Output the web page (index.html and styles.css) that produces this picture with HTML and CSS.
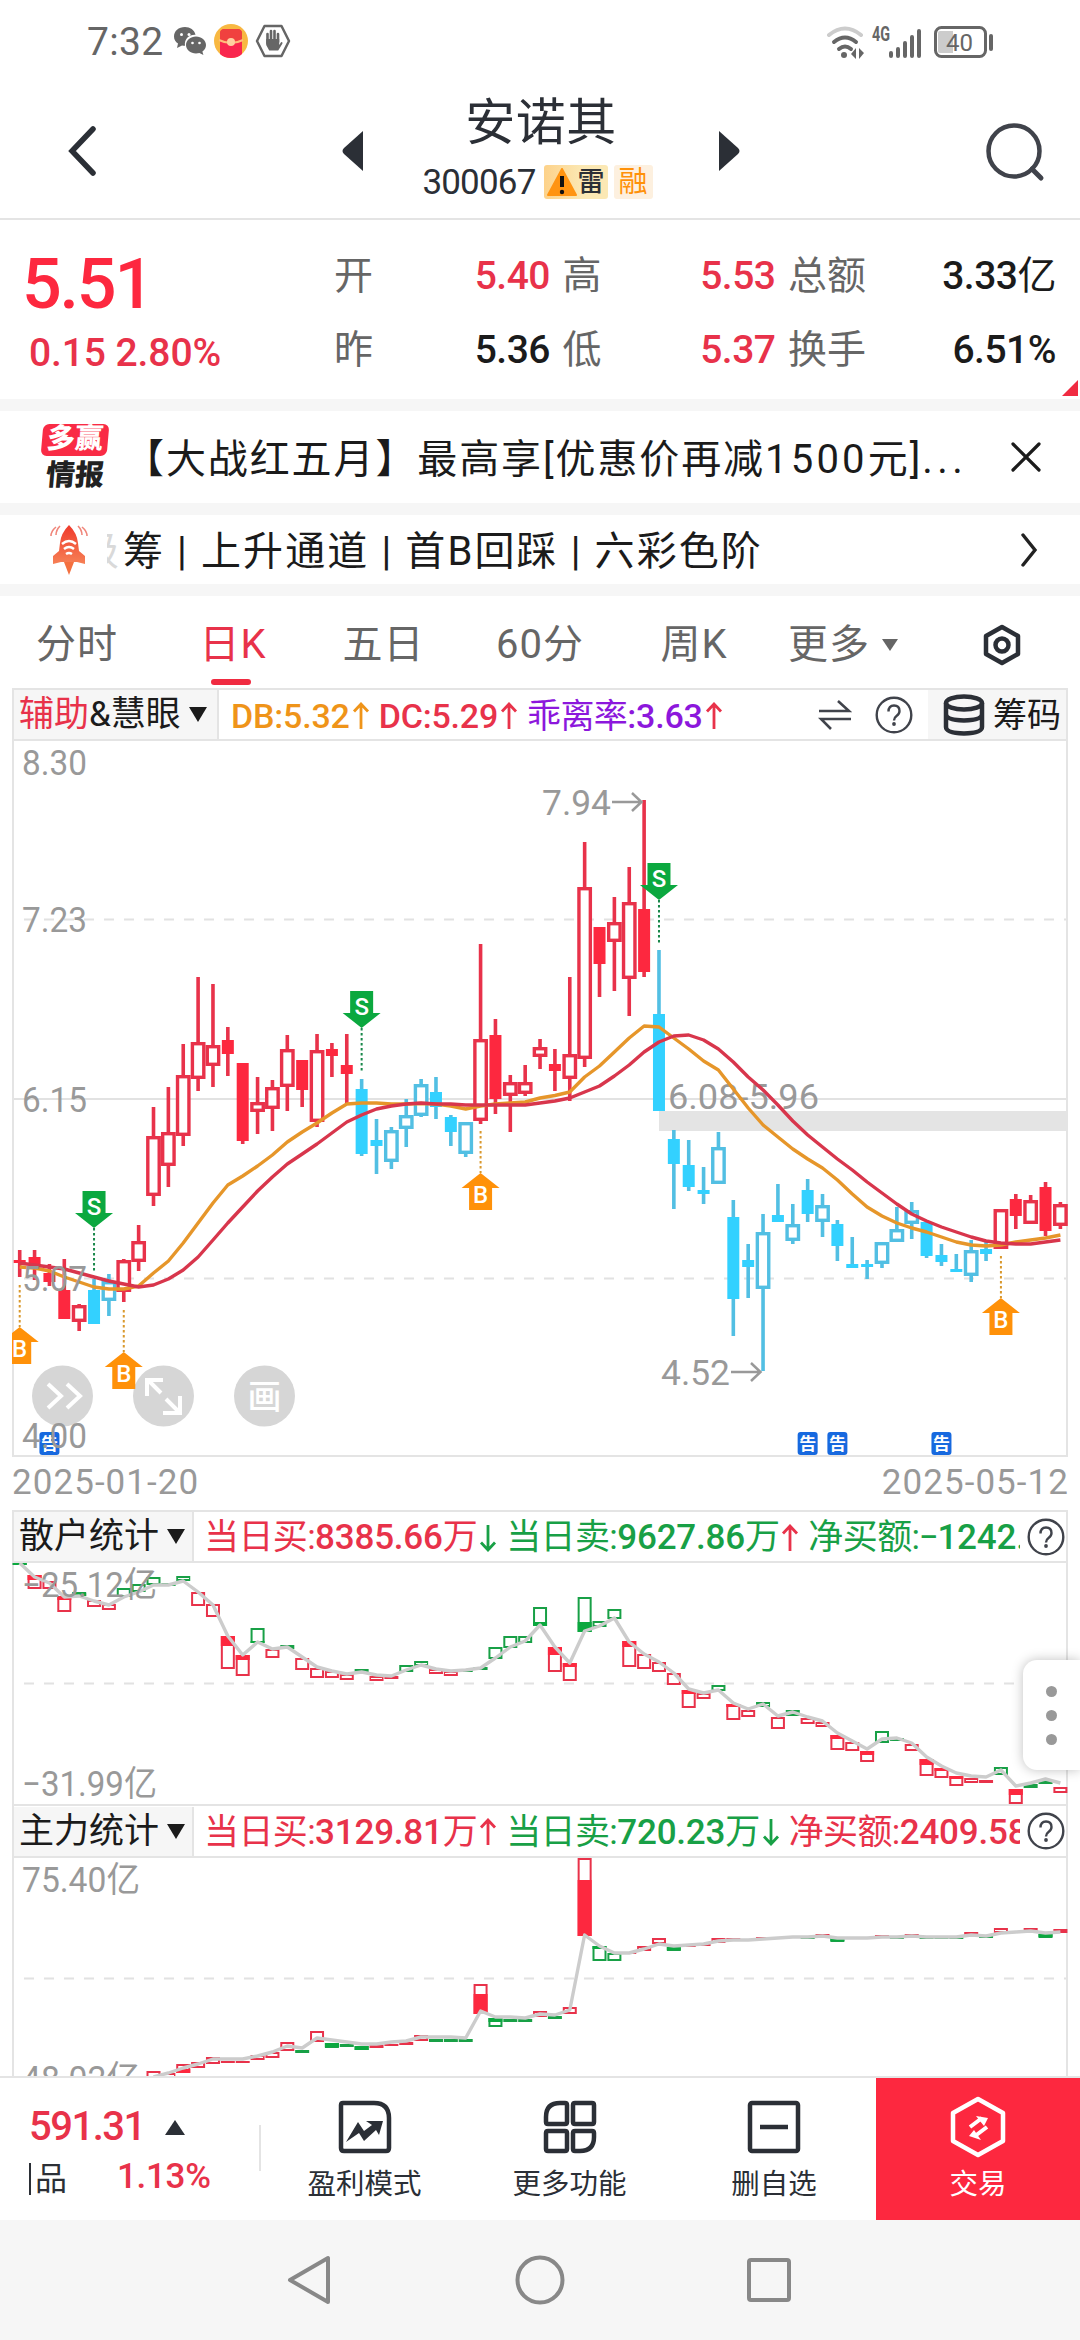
FILE: index.html
```html
<!DOCTYPE html>
<html lang="zh-CN">
<head>
<meta charset="utf-8">
<title>安诺其 300067</title>
<link rel="stylesheet" href="styles.css">
</head>
<body>
<div class="app">
  <header class="status">
    <span class="clock">7:32</span>
    <svg class="ic-wechat" width="34" height="30" viewBox="0 0 34 30"><path fill="#666" d="M12 1C5.500 1 1 5 1 10.500c0 3 1.500 5.500 4 7L4 22l5-2.600c1 .3 2 .4 3 .4C11 13 16 8.500 22.500 8.800 21.500 4 17 1 12 1z"/><path fill="#666" d="M23 10.500c-5.500 0-10 3.800-10 8.500s4.500 8.500 10 8.500c1.200 0 2.400-.2 3.400-.5l4 2-1-3.500c2.200-1.500 3.600-3.800 3.600-6.500 0-4.700-4.500-8.500-10-8.500z"/><g fill="#fff"><circle cx="8.500" cy="8.500" r="1.500"/><circle cx="16" cy="8.500" r="1.500"/><circle cx="19.500" cy="17" r="1.300"/><circle cx="26.500" cy="17" r="1.300"/></g></svg>
    <svg class="ic-packet" width="34" height="34" viewBox="0 0 34 34"><circle cx="17" cy="17" r="17" fill="#f8b842"/><path d="M6 10q0-5 5-5h12q5 0 5 5v20q-4 4-11 4T6 30z" fill="#f9264e"/><path d="M6 9q0-4 5-4h12q5 0 5 4v6q-11 7-22 0z" fill="#f0413f"/><path d="M5 16q12 6 24 0" fill="none" stroke="#ffbd7a" stroke-width="2"/><circle cx="17" cy="18" r="4" fill="#ffd0a0"/></svg>
    <svg class="ic-hand" width="36" height="34" viewBox="0 0 36 34"><path d="M9.500 2h17L34 17l-7.500 15h-17L2 17z" fill="none" stroke="#666" stroke-width="2.500" stroke-linejoin="round"/><path d="M12.500 19v-9M16 17V7M19.500 17V7M23 18v-8" stroke="#666" stroke-width="2.600" stroke-linecap="round"/><path d="M11.200 15h13V21l2-3q2 0 1 2l-4 6.500h-9L11.200 21z" fill="#666"/></svg>
    <span class="grow"></span>
    <svg width="168" height="40" viewBox="0 0 168 40"><g fill="none" stroke-linecap="round"><path d="M3 14q16-13 32 0" stroke="#ccc" stroke-width="4"/><path d="M8 21q11-9 22 0M13 28q6-5 12 0" stroke="#666" stroke-width="4"/></g><circle cx="18" cy="34" r="3" fill="#666"/><path d="M30 27v11l-5-5M33 38V27l5 5z" fill="#666"/><text x="46" y="20" class="net" textLength="18" lengthAdjust="spacingAndGlyphs">4G</text><path d="M65 32v3M72 28v7M79 22v13M86 16v19M93 10v25" stroke="#666" stroke-width="4" stroke-linecap="round"/><rect x="109.500" y="6.500" width="50" height="29" rx="6" fill="#fff" stroke="#666" stroke-width="3"/><path d="M114 10h13v22h-13q-2 0-2-2V12q0-2 2-2z" fill="#ccc"/><text x="120" y="30" class="bat" textLength="27" lengthAdjust="spacingAndGlyphs">40</text><path d="M165 15v13" stroke="#666" stroke-width="4" stroke-linecap="round"/></svg>
  </header>

  <nav class="topbar">
    <svg class="back" width="34" height="54" viewBox="0 0 34 54"><path d="M28 5L7 27l21 22" fill="none" stroke="#2b2f36" stroke-width="5.500" stroke-linecap="round"/></svg>
    <svg class="prev" width="22" height="42" viewBox="0 0 22 42"><path d="M21 1v40L2 24q-3-3 0-6z" fill="#2b2f36"/></svg>
    <div class="stock">
      <h1>安诺其</h1>
      <div class="code"><span>300067</span>
        <span class="badge risk"><svg width="30" height="28" viewBox="0 0 30 28"><path d="M15 1L29 27H1z" fill="#ff9412" stroke="#ff9412" stroke-linejoin="round" stroke-width="2"/><path d="M15 8v11" stroke="#111" stroke-width="4"/><circle cx="15" cy="24" r="2.200" fill="#111"/></svg>雷</span>
        <span class="badge margin">融</span></div>
    </div>
    <svg class="next" width="22" height="42" viewBox="0 0 22 42"><path d="M1 1v40l19-17q3-3 0-6z" fill="#2b2f36"/></svg>
    <svg class="search" width="62" height="62" viewBox="0 0 62 62"><circle cx="30" cy="30" r="25.500" fill="none" stroke="#40434b" stroke-width="4.500"/><path d="M48 48l9 9" stroke="#40434b" stroke-width="5" stroke-linecap="round"/></svg>
  </nav>

  <section class="quote">
    <div class="last"><b>5.51</b><span>0.15 2.80%</span></div>
    <dl>
      <div><dt>开</dt><dd class="up">5.40</dd></div><div><dt>高</dt><dd class="up">5.53</dd></div><div><dt>总额</dt><dd>3.33<em>亿</em></dd></div>
      <div><dt>昨</dt><dd>5.36</dd></div><div><dt>低</dt><dd class="up">5.37</dd></div><div><dt>换手</dt><dd>6.51%</dd></div>
    </dl>
    <i class="corner"></i>
  </section>

  <section class="promo">
    <div class="logo"><span class="logo-a">多赢</span><span class="logo-b">情报</span></div>
    <p>【大战红五月】最高享[优惠价再减<span class="sum">1500</span>元]<span class="dots">...</span></p>
    <svg width="30" height="30" viewBox="0 0 30 30"><path d="M2 2l26 26M28 2L2 28" stroke="#1b1b1b" stroke-width="3.200" stroke-linecap="round"/></svg>
  </section>

  <section class="features">
    <svg class="rocket" width="42" height="52" viewBox="0 0 42 52"><defs><linearGradient id="rk" x1="0" y1="0" x2="0" y2="1"><stop offset="0" stop-color="#ef3a2c"/><stop offset="1" stop-color="#f68055"/></linearGradient></defs><path d="M16 38h10l-5 13z" fill="#f4703f"/><path d="M21 1q8 8 9 18l1 8 6 5v8l-8-2H13l-8 2v-8l6-5 1-8Q13 9 21 1z" fill="url(#rk)"/><path d="M14 20q7-6 14 0M16 25q5-4 10 0M18 30q3-2 6 0" fill="none" stroke="#fff" stroke-width="2.400"/><path d="M8 3q-5 4-5 9M12 2Q8 6 8 11M34 3q5 4 5 9M30 2q4 4 4 9" fill="none" stroke="#f0867a" stroke-width="1.600"/></svg>
    <span class="cut">级</span>
    <p>筹 | 上升通道 | 首B回踩 | 六彩色阶</p>
    <svg width="18" height="36" viewBox="0 0 18 36"><path d="M2 3l12 15L2 33" fill="none" stroke="#222" stroke-width="3.400" stroke-linecap="round"/></svg>
  </section>

  <div class="tabs">
    <span>分时</span><span class="on">日K</span><span>五日</span><span>60分</span><span>周K</span>
    <span>更多<svg width="18" height="14" viewBox="0 0 18 14"><path d="M1 1h16L9 13z" fill="#666"/></svg></span>
    <span><svg width="38" height="42" viewBox="0 0 38 42"><path d="M19 3l16 9v18l-16 9-16-9V12z" fill="none" stroke="#2b2f36" stroke-width="4.500" stroke-linejoin="round"/><circle cx="19" cy="21" r="6.500" fill="none" stroke="#2b2f36" stroke-width="4.500"/></svg></span>
  </div>

  <section class="panel main">
    <div class="bar">
      <div class="pick wide"><span class="up">辅助</span>&amp;慧眼<i class="tri"></i></div>
      <div class="vals">
        <span class="db"><b>DB:5.32</b><svg class="ar"><use href="#up"/></svg></span>
        <span class="up"><b>DC:5.29</b><svg class="ar"><use href="#up"/></svg></span>
        <span class="bias">乖离率<b>:3.63</b><svg class="ar up"><use href="#up"/></svg></span>
      </div>
      <svg class="swap" width="34" height="30" viewBox="0 0 34 30"><path d="M1 11h30L20 1M33 19H3l10 10" fill="none" stroke="#40434b" stroke-width="2.600"/></svg>
      <svg class="help"><use href="#help"/></svg>
      <div class="chips"><svg width="42" height="42" viewBox="0 0 42 42"><g fill="none" stroke="#2b2f36" stroke-width="4.500"><ellipse cx="21" cy="9" rx="18" ry="6.500"/><path d="M3 9v24q0 6 18 6.500Q39 39 39 33V9M3 20q0 6 18 6.500Q39 26 39 20"/></g></svg>筹码</div>
    </div>
    <svg id="kline" class="plot" width="1056" height="716" viewBox="12 741 1056 716"></svg>
  </section>
  <div class="dates"><span>2025-01-20</span><span>2025-05-12</span></div>

  <section class="panel retail">
    <div class="bar">
      <div class="pick">散户统计<i class="tri"></i></div>
      <div class="vals">
        <span class="up">当日买:<b>8385.66</b>万<svg class="ar down"><use href="#dn"/></svg></span>
        <span class="down">当日卖:<b>9627.86</b>万<svg class="ar up"><use href="#up"/></svg></span>
        <span class="down">净买额:<em>−</em><b>1242.</b></span>
      </div>
      <svg class="help"><use href="#help"/></svg>
    </div>
    <svg id="retail" class="plot" width="1056" height="241" viewBox="12 1563 1056 241"></svg>
    <aside class="drawer"><i></i><i></i><i></i></aside>
  </section>

  <section class="panel force">
    <div class="bar">
      <div class="pick">主力统计<i class="tri"></i></div>
      <div class="vals">
        <span class="up">当日买:<b>3129.81</b>万<svg class="ar"><use href="#up"/></svg></span>
        <span class="down">当日卖:<b>720.23</b>万<svg class="ar"><use href="#dn"/></svg></span>
        <span class="up">净买额:<b>2409.58</b></span>
      </div>
      <svg class="help"><use href="#help"/></svg>
    </div>
    <svg id="force" class="plot" width="1056" height="218" viewBox="12 1858 1056 218"></svg>
  </section>

  <footer class="actions">
    <div class="index">
      <div><b>591.31</b><i></i></div>
      <div class="row2"><span>品</span><em>1.13%</em></div>
    </div>
    <div class="act"><svg width="54" height="54" viewBox="0 0 54 54"><path d="M5 3h31q15 0 15 15v30q0 3-3 3H6q-3 0-3-3V5q0-2 2-2z" fill="none" stroke="#2b2f36" stroke-width="4.500"/><path d="M8 42l12-20 6 9 8-6-6-4h17l-4 14-3-5-12 11-5-8z" fill="#2b2f36"/></svg>盈利模式</div>
    <div class="act"><svg width="54" height="54" viewBox="0 0 54 54"><g fill="none" stroke="#2b2f36" stroke-width="4.500"><path d="M17 3h5q2 0 2 2v17q0 2-2 2H5q-2 0-2-2v-5Q3 3 17 3zM32 3h17q2 0 2 2v17q0 2-2 2H32q-2 0-2-2V5q0-2 2-2zM5 31h17q2 0 2 2v16q0 2-2 2H5q-2 0-2-2V33q0-2 2-2zM32 31h17q2 0 2 2v4q0 14-14 14h-5q-2 0-2-2V33q0-2 2-2z"/></g></svg>更多功能</div>
    <div class="act"><svg width="54" height="54" viewBox="0 0 54 54"><rect x="3" y="3" width="48" height="48" rx="2" fill="none" stroke="#2b2f36" stroke-width="4.500"/><path d="M13 27h28" stroke="#2b2f36" stroke-width="4.500"/></svg>删自选</div>
    <div class="trade"><svg width="56" height="62" viewBox="0 0 56 62"><path d="M28 3l25 14v28L28 59 3 45V17z" fill="none" stroke="#fff" stroke-width="4.500" stroke-linejoin="round"/><path d="M20 31l12-9M37 31l-12 9" stroke="#fff" stroke-width="4"/><path d="M26 20l12 2-4 8zM31 44l-12-4 5-6z" fill="#fff"/></svg>交易</div>
  </footer>

  <div class="sysnav">
    <svg width="48" height="52" viewBox="0 0 48 52"><path d="M43 4v44L5 26z" fill="none" stroke="#888" stroke-width="4" stroke-linejoin="round"/></svg>
    <svg width="52" height="52" viewBox="0 0 52 52"><circle cx="26" cy="26" r="22.500" fill="none" stroke="#888" stroke-width="4"/></svg>
    <svg width="46" height="46" viewBox="0 0 46 46"><rect x="3" y="3" width="40" height="40" rx="2" fill="none" stroke="#888" stroke-width="4"/></svg>
  </div>
</div>

<svg class="defs">
  <symbol id="up" viewBox="0 0 18 28"><path d="M9 27V2M2 9.500L9 2l7 7.500" fill="none" stroke="currentColor" stroke-width="2.800"/></symbol>
  <symbol id="dn" viewBox="0 0 18 28"><path d="M9 1v25M2 18.500L9 26l7-7.500" fill="none" stroke="currentColor" stroke-width="2.800"/></symbol>
  <symbol id="help" viewBox="0 0 38 38"><circle cx="19" cy="19" r="17.300" fill="none" stroke="#40434b" stroke-width="2.400"/><path d="M13.500 15.500q0-6 5.500-6t5.500 5.500q0 3-3 5-2.500 1.800-2.500 4.500" fill="none" stroke="#40434b" stroke-width="2.400"/><circle cx="19" cy="28" r="1.900" fill="#40434b"/></symbol>
</svg>
<script src="chart.js"></script>
</body>
</html>
```
FILE: styles.css
```css
* { box-sizing: border-box; margin: 0; padding: 0; }
body { width: 1080px; height: 2340px; overflow: hidden; background: #f6f6f6; font-family: Roboto, "Noto Sans CJK SC", sans-serif; color: #1b1b1b; line-height: 1; }
i, em { font-style: normal; }
svg { display: block; flex: none; }
.defs { display: none; }
.app { display: flex; flex-direction: column; width: 1080px; height: 2340px; }
.app > * { flex: none; }
.grow { flex: 1; }
.up { color: #e8324a; }
.down { color: #18a046; }

.status { height: 80px; background: #fff; display: flex; align-items: center; padding: 2px 86px 0 87px; }
.clock { font-size: 39px; color: #666; width: 86px; letter-spacing: .3px; padding-top: 3px; }
.ic-packet { margin-left: 7px; }
.ic-hand { margin-left: 7px; }
.net { font: 700 20px Roboto, sans-serif; fill: #666; }
.bat { font: 24px Roboto, sans-serif; fill: #666; }

.topbar { height: 140px; background: #fff; border-bottom: 2px solid #e4e4e4; display: flex; padding-left: 65px; }
.back { margin-top: 44px; }
.prev { margin: 50px 0 0 243px; }
.stock { width: 354px; display: flex; flex-direction: column; align-items: center; }
.stock h1 { font-size: 50px; font-weight: 400; color: #2b2f36; line-height: 60px; margin-top: 13px; letter-spacing: .5px; }
.code { display: flex; align-items: center; font-size: 35px; color: #2b2f36; letter-spacing: -.8px; height: 34px; margin-top: 12px; margin-right: 7px; }
.badge { height: 34px; display: flex; align-items: center; border-radius: 3px; letter-spacing: 0; }
.risk { width: 64px; margin: 0 6px 0 8px; padding-left: 3px; background: linear-gradient(90deg, #fdd28a, #fbe8b4 60%); font-size: 27px; font-weight: 500; gap: 1px; }
.margin { width: 39px; justify-content: center; background: #fdf0df; color: #ff9109; font-size: 29px; }
.next { margin-top: 50px; }
.search { margin: 41px 0 0 244px; }

.quote { position: relative; height: 179px; background: #fff; display: flex; }
.last { width: 334px; padding-left: 22px; color: #fd283f; }
.last b { display: block; font-size: 70px; font-weight: 500; letter-spacing: -2.200px; line-height: 70px; margin-top: 29px; }
.last span { display: block; margin: 14px 0 0 7px; font-size: 39px; font-weight: 500; letter-spacing: -.1px; line-height: 40px; color: #e8324a; }
.quote dl { width: 724px; display: grid; grid-template-columns: 216px 213px 268px; column-gap: 12.500px; grid-template-rows: 74px 74px; padding-top: 19px; }
.quote dl > div { display: flex; justify-content: space-between; align-items: center; font-size: 39px; }
.quote dt { color: #666; }
.quote dd { font-weight: 500; letter-spacing: -.5px; }
.quote dd em { font-weight: 400; }
.corner { position: absolute; right: 2px; bottom: 3px; border: 8px solid transparent; border-right-color: #f02b41; border-bottom-color: #f02b41; }

.promo { margin-top: 12px; height: 92px; background: #fff; display: flex; align-items: center; padding-left: 40px; }
.logo { width: 70px; display: flex; flex-direction: column; align-items: center; gap: 5px; }
.logo span { font-weight: 900; transform: skewX(-5deg); }
.logo-a { width: 66px; height: 32px; border-radius: 6px; background: #f92b45; color: #fff; font-size: 28px; line-height: 30px; text-align: center; }
.logo-b { font-size: 29px; line-height: 29px; color: #222; }
.promo p { width: 901px; padding: 5px 0 0 14px; font-size: 40px; letter-spacing: 1.900px; white-space: nowrap; }
.sum { letter-spacing: 3.200px; }
.dots { letter-spacing: 4.500px; }
.features { margin-top: 12px; height: 69px; background: #fff; display: flex; align-items: center; padding-left: 48px; font-size: 40px; }
.cut { display: flex; justify-content: flex-end; width: 12px; margin: 4px 4px 0 17px; overflow: hidden; color: #d9d9d9; }
.features p { width: 898px; padding-top: 4px; letter-spacing: 2.100px; white-space: pre; }

.tabs { margin-top: 12px; height: 92px; background: #fff; display: grid; grid-template-columns: 154px 158px 143px 170px 138px 161px 156px; font-size: 40px; letter-spacing: 1px; color: #666; }
.tabs span { position: relative; display: flex; align-items: center; justify-content: center; gap: 11px; padding-top: 5px; }
.tabs .on { color: #e8324a; }
.tabs .on::after { content: ""; position: absolute; left: 57px; bottom: 3px; width: 40px; height: 6px; border-radius: 3px; background: #f02b41; }

.panel { position: relative; background: #fff; padding: 0 12px; }
.bar { height: 53px; border: 2px solid #e4e4e4; display: flex; align-items: center; font-size: 35px; }
.pick { width: 180px; height: 49px; flex: none; background: #f6f6f6; border-right: 2px solid #e4e4e4; display: flex; align-items: center; padding-left: 5px; white-space: nowrap; }
.pick.wide { width: 205px; font-size: 35px; }
.tri { border: 9px solid transparent; border-top: 15px solid #1b1b1b; border-bottom: 0; margin-left: 8px; }
.vals { flex: none; width: 826px; padding: 0 0 0 10px; display: flex; gap: 9px; overflow: hidden; white-space: nowrap; font-size: 35px; }
.vals span { display: flex; align-items: baseline; letter-spacing: -.6px; flex: none; padding-top: 2px; }
.vals b { font-weight: 500; letter-spacing: -.2px; }
.ar { width: 18px; height: 28px; margin-left: 2px; align-self: center; }
.help { width: 38px; height: 38px; margin-left: 7px; }
.main .vals { width: 599px; font-size: 34px; padding-left: 12px; }
.main .help { margin-left: 23px; }
.db { color: #ef9419; }
.bias { color: #8c17dc; }
.swap { flex: none; }
.chips { flex: none; width: 138px; height: 49px; margin-left: 15px; background: #f6f6f6; display: flex; align-items: center; gap: 8px; padding-left: 15px; font-size: 34px; }
.plot { border: 0; }
.dates { height: 53px; background: #fff; display: flex; justify-content: space-between; padding: 7px 11px 0 12px; font-size: 35px; letter-spacing: 1.050px; color: #999; line-height: 38px; }
.force .bar { height: 54px; }
.retail em { display: flex; justify-content: center; width: 18px; }
.drawer { position: absolute; right: 0; top: 150px; width: 57px; height: 110px; border-radius: 14px 0 0 14px; background: #fff; box-shadow: 0 0 12px rgba(0,0,0,.25); display: flex; flex-direction: column; align-items: center; justify-content: center; gap: 13px; }
.drawer i { width: 11px; height: 11px; border-radius: 50%; background: #999; }
.axis { font: 35px Roboto, "Noto Sans CJK SC", sans-serif; fill: #999; }
.mark { font: 500 24px Roboto, sans-serif; fill: #fff; text-anchor: middle; }
.note { font: 700 17px "Noto Sans CJK SC", sans-serif; fill: #fff; text-anchor: middle; }
.draw { font: 500 34px "Noto Sans CJK SC", sans-serif; fill: #fff; text-anchor: middle; }

.actions { height: 144px; background: #fff; border-top: 2px solid #e4e4e4; display: grid; grid-template-columns: 262px 205px 205px 204px 204px; color: #2b2f36; }
.index { position: relative; padding: 30px 0 0 29px; }
.index::after { content: ""; position: absolute; right: 1px; top: 47px; width: 2px; height: 46px; background: #e4e4e4; }
.index div { display: flex; align-items: center; height: 38px; }
.index b { font-size: 40px; font-weight: 500; letter-spacing: -1.500px; color: #e8324a; }
.index i { border: 10px solid transparent; border-bottom: 15px solid #2b2f36; border-top: 0; margin-left: 20px; }
.index .row2 { margin-top: 11px; font-size: 32px; }
.row2 span { border-left: 2px solid #2b2f36; padding-left: 4px; margin-top: 5px; }
.row2 em { margin-left: 50px; font-size: 35px; font-weight: 500; letter-spacing: -.3px; color: #e8324a; }
.act, .trade { display: flex; flex-direction: column; align-items: center; font-size: 28.500px; padding-top: 22px; gap: 17px; }
.trade { background: #fd283f; color: #fff; padding-top: 18px; gap: 13px; }

.sysnav { height: 120px; background: #f6f6f6; display: flex; align-items: center; justify-content: space-between; padding: 0 288px 0 285px; }
```
FILE: chart.js
```js
const RED = '#e8324a', RED_FILL = '#fd283f', CYAN = '#52bfe3', CYAN_FILL = '#33d1ff', GREEN = '#18a046', GREEN_FILL = '#0ba83f';
const X = i => 19.7 + 14.867 * i;
const rect = (x, y, w, h, a) => `<rect x="${x}" y="${y}" width="${w}" height="${h}" ${a}/>`;
const poly = (v, from, color, w) => `<polyline points="${v.map((y, i) => X(i + from).toFixed(1) + ',' + y).join(' ')}" fill="none" stroke="${color}" stroke-width="${w}" stroke-linejoin="round"/>`;
const label = (x, y, s, len) => `<text x="${x}" y="${y}" class="axis" textLength="${len}" lengthAdjust="spacingAndGlyphs">${s}</text>`;
const dash = y => `<path d="M4 ${y}H1067" stroke="#e2e2e2" stroke-width="2" stroke-dasharray="10 10"/>`;
const frame = (y, b) => `<path d="M13 ${y}V${b}M1067 ${y}V${b}" stroke="#e4e4e4" stroke-width="2"/>`;

// [style, high, body top, body bottom, low]; lower case is filled, upper case is hollow
const candles = [
['r',1250,1260,1263,1277],['r',1250,1257,1265,1280],['r',1264,1273,1282,1286],['r',1259,1290,1319,1319],['R',1304,1305,1322,1331],
['c',1279,1290,1324,1324],['C',1274,1281,1301,1316],['R',1259,1260,1292,1302],['R',1225,1241,1262,1271],['R',1107,1136,1196,1206],
['R',1087,1132,1166,1187],['R',1044,1075,1136,1146],['R',977,1042,1079,1091],['R',984,1045,1066,1087],['r',1027,1040,1054,1076],
['r',1063,1063,1141,1144],['R',1077,1102,1112,1134],['R',1080,1087,1109,1131],['R',1035,1049,1087,1111],['r',1060,1060,1090,1107],
['R',1034,1050,1122,1127],['r',1043,1049,1056,1077],['r',1034,1065,1074,1105],['c',1079,1089,1154,1156],['c',1119,1140,1146,1174],
['C',1127,1130,1162,1169],['C',1099,1115,1129,1147],['C',1079,1084,1116,1117],['c',1077,1092,1107,1119],['c',1115,1117,1132,1146],
['C',1122,1122,1154,1157],['R',944,1039,1121,1124],['r',1019,1035,1099,1114],['R',1075,1082,1096,1132],['R',1065,1082,1094,1096],
['R',1039,1047,1057,1069],['r',1049,1064,1071,1091],['R',977,1054,1079,1101],['R',842,887,1059,1067],['r',927,927,964,997],
['R',897,922,942,991],['R',867,902,979,1016],['r',800,909,972,977],['c',950,1014,1111,1111],['c',1130,1139,1164,1209],
['c',1140,1165,1187,1191],['c',1167,1190,1194,1204],['C',1132,1147,1184,1184],['c',1200,1217,1299,1336],['c',1244,1260,1267,1298],
['C',1214,1232,1289,1371],['c',1184,1215,1222,1222],['C',1204,1224,1241,1244],['c',1179,1190,1214,1222],['C',1194,1205,1222,1237],
['c',1220,1224,1246,1261],['c',1237,1264,1268,1268],['c',1260,1264,1267,1279],['C',1242,1242,1264,1268],['C',1207,1229,1242,1242],
['C',1202,1210,1224,1239],['c',1222,1222,1256,1258],['c',1244,1255,1262,1266],['c',1254,1269,1272,1272],['C',1240,1250,1276,1282],
['c',1240,1249,1254,1261],['R',1209,1209,1249,1249],['r',1194,1199,1216,1229],['R',1195,1200,1224,1224],['r',1182,1187,1231,1236],
['R',1202,1204,1226,1229]];

const db = [1267,1268,1271,1277,1282,1287,1289,1289,1286,1273,1261,1243,1223,1203,1185,1176,1166,1155,1142,1132,1123,1113,1104,1103,1103,1104,1104,1103.500,1104,1106,1109,1106,1104,1103,1102,1098,1095.500,1092,1077,1066,1052,1038,1026,1027,1038,1049,1061,1070,1089,1108,1125,1137,1149,1159,1168,1180,1194,1207,1216,1223,1228,1232,1237,1242,1245,1246,1245,1242,1240,1238,1235];
const dc = [1263,1265,1267,1269,1273,1277,1281,1284,1287,1285,1279,1270,1257,1240,1223,1207,1191,1177,1164,1154,1144,1133,1122,1115,1109,1106,1104,1103,1104,1104,1105,1105,1105,1105,1105,1103,1101,1098,1092,1086,1076,1065,1052,1042,1036,1035,1040,1049,1062,1077,1090,1105,1121,1135,1147,1159,1170,1182,1193,1204,1214,1221,1227,1232,1237,1241,1243,1244,1244,1242,1240];

function candle([t, h, a, b, l], i) {
  const x = X(i), red = t.toLowerCase() === 'r', c = red ? RED : CYAN;
  if (t === t.toLowerCase()) {
    return rect(x - 1.8, h, 3.600, l - h, `fill="${c}"`) + rect(x - 6, a, 12, b - a, `fill="${red ? RED_FILL : CYAN_FILL}"`);
  }
  return rect(x - 1.8, h, 3.600, a - h + 1, `fill="${c}"`) + rect(x - 1.8, b - 1, 3.600, l - b + 1, `fill="${c}"`) +
    rect(x - 5.700, a + 1.700, 11.400, b - a - 3.400, `fill="#fff" stroke="${c}" stroke-width="3.400"`);
}
function sell(i, y) {
  const x = X(i);
  return `<path d="M${x - 11.500} ${y}h23v22h7.500L${x} ${y + 37}L${x - 19} ${y + 22}h7.500z" fill="${GREEN_FILL}"/><path d="M${x} ${y + 37}v43" stroke="#18874a" stroke-width="2" stroke-dasharray="2.500 2.500"/><text x="${x}" y="${y + 24}" class="mark">S</text>`;
}
function buy(i, y) {
  const x = X(i);
  return `<path d="M${x} ${y}L${x + 19} ${y + 15}h-7.500v22h-23v-22H${x - 19}z" fill="#ff9109"/><path d="M${x} ${y - 42}v42" stroke="#d9982c" stroke-width="2" stroke-dasharray="2.500 2.500"/><text x="${x}" y="${y + 30}" class="mark">B</text>`;
}
const arrow = (x, y) => `<path d="M${x} ${y}h29M${x + 20} ${y - 9}l9.500 9l-9.500 9" fill="none" stroke="#999" stroke-width="2.500"/>`;
const notice = i => rect(X(i) - 10, 1432, 20, 23, 'rx="3" fill="#1769df"') + `<text x="${X(i)}" y="1450" class="note">告</text>`;

document.getElementById('kline').innerHTML =
  dash(919.5) + dash(1278.5) + '<path d="M12 1099H1068" stroke="#e2e2e2" stroke-width="2"/>' + frame(741, 1457) +
  '<path d="M12 1456H1068" stroke="#e4e4e4" stroke-width="2"/>' +
  rect(659, 1111, 409, 20, 'fill="#e4e4e4"') +
  ['62.5', '163.5', '264.5'].map(x => `<circle cx="${x}" cy="1396" r="30.500" fill="#d6d6d6"/>`).join('') +
  '<path d="M48 1384l13 12-13 12M67 1384l13 12-13 12" fill="none" stroke="#fff" stroke-width="4"/>' +
  '<path d="M161 1393l-13-13M166 1399l13 13M147 1396v-16h16M180 1396v17h-17" fill="none" stroke="#fff" stroke-width="4"/>' +
  '<text x="264.5" y="1409" class="draw">画</text>' +
  candles.map(candle).join('') +
  label(668, 1109, '6.08-5.96', 151) + poly(db, 0, '#e6962a', 3.400) + poly(dc, 0, '#d8364c', 3.400) +
  sell(5, 1191) + sell(23, 991) + sell(43, 863) + buy(0, 1327) + buy(7, 1352) + buy(31, 1173) + buy(66, 1298) +
  label(542, 815, '7.94', 69) + arrow(612, 802) + label(661, 1385, '4.52', 69) + arrow(731, 1372) +
  [2, 53, 55, 62].map(notice).join('') +
  label(22, 775, '8.30', 65) + label(22, 932, '7.23', 65) + label(22, 1112, '6.15', 65) + label(22, 1291, '5.07', 65) + label(22, 1448, '4.00', 65);

// [colour, top, bottom, solid part]; the solid part sits on the side nearest the line
const retail = [
['g',1562,1565,3],['r',1575,1589,5],['r',1581,1589],['r',1596,1612,4],['g',1592,1596,3],['r',1600,1607],['r',1604,1610],['g',1588,1597],['g',1584,1592],['g',1577,1585],
['g',1583,1586,2],['g',1576,1581],['r',1592,1606],['r',1604,1617],['r',1636,1669,10],['r',1655,1676,5],['g',1628,1643,2],['r',1649,1658],['g',1645,1649],['r',1658,1670],
['r',1668,1678],['r',1671,1678],['r',1674,1680],['g',1669,1673],['r',1676,1681],['r',1676,1679],['g',1665,1672],['g',1661,1666],['r',1669,1674],['r',1671,1676],
['g',1669,1672],['g',1667,1670],['g',1647,1659],['g',1636,1648],['g',1636,1643],['g',1607,1626,4],['r',1647,1672,8],['r',1663,1681,4],['g',1597,1632,10],['g',1621,1627],
['g',1609,1619],['r',1641,1667,6],['r',1654,1669],['r',1662,1672],['r',1673,1685],['r',1690,1708,4],['r',1693,1699],['g',1685,1691],['r',1704,1720,3],['r',1710,1717],
['g',1702,1707],['r',1717,1729],['g',1710,1716],['r',1718,1724],['r',1722,1727],['r',1735,1750,4],['r',1742,1751],['r',1751,1762,4],['g',1731,1743],['g',1738,1741],
['r',1744,1751],['r',1759,1776,6],['r',1768,1778,3],['r',1776,1786,3],['r',1778,1783],['r',1780,1783],['g',1767,1775],['r',1789,1804,6],['g',1784,1788],['g',1780,1784],['r',1787,1793]];
const retailLine = [1563,1577,1583,1597,1596,1601,1605,1597,1592,1585,1585,1581,1592,1605,1636,1655,1642,1649,1647,1657,1667,1671,1674,1672,1675,1676,1670,1665,1669,1671,1670,1668,1658,1647,1641,1625,1647,1663,1631,1626,1618,1642,1654,1662,1673,1689,1693,1690,1703,1709,1704,1716,1712,1717,1721,1733,1741,1749,1739,1738,1743,1757,1766,1773,1776,1777,1770,1786,1783,1779,1783];
const force = [
['r',2071,2078],['r',2073,2078],['r',2064,2073,4],['r',2062,2068],['r',2057,2064],['r',2061,2063],['r',2061,2063],['r',2055,2060],['r',2052,2058],['r',2042,2051],
['g',2050,2053],['r',2031,2042],['g',2043,2048,4],['g',2044,2047],['g',2046,2050,4],['r',2045,2048],['r',2044,2046],['r',2042,2045],['r',2035,2041],['g',2039,2042],
['g',2039,2042],['g',2039,2042],['r',1984,2014,20],['g',2018,2027,4],['g',2019,2022],['g',2019,2022],['r',2011,2017],['g',2016,2019],['r',2007,2014],['r',1858,1936,56],
['g',1946,1961,3],['g',1953,1961],['r',1952,1954],['r',1946,1951],['r',1938,1944],['g',1947,1951,3],['r',1945,1947],['r',1943,1946],['r',1938,1943],['r',1938,1941],
['r',1939,1941],['r',1937,1940],['r',1937,1939],['r',1936,1938],['g',1937,1939],['r',1934,1938],['g',1938,1942,3],['r',1937,1939],['r',1937,1939],['r',1935,1938],
['g',1936,1939],['r',1934,1938],['g',1937,1939],['g',1937,1939],['g',1937,1939],['r',1932,1936],['g',1935,1938],['r',1928,1933],['r',1931,1933],['r',1928,1932],['g',1934,1938,3],['r',1929,1933]];
const forceLine = [2077,2073,2068,2064,2059,2059,2059,2056,2052,2046,2048,2038,2040,2042,2044,2044,2042,2041,2037,2037,2037,2038,2011,2017,2017,2018,2014,2015,2010,1935,1946,1953,1953,1949,1944,1946,1945,1944,1941,1940,1940,1939,1938,1937,1937,1936,1938,1938,1938,1937,1937,1936,1937,1937,1937,1935,1936,1933,1932,1931,1933,1932];

function boxes(data, from, solidLow) {
  return data.map(([t, a, b, f], i) => {
    const x = X(i + from), red = t === 'r', h = b - a;
    let s = h < 4 ? rect(x - 7, a, 14, h, `fill="${red ? RED : GREEN}"`)
      : rect(x - 6, a + 1, 12, h - 2, `fill="#fff" stroke="${red ? RED : GREEN}" stroke-width="2"`);
    if (f) s += rect(x - 7, (red === solidLow) ? b - f : a, 14, f, `fill="${red ? RED_FILL : GREEN_FILL}"`);
    return s;
  }).join('');
}
document.getElementById('retail').innerHTML = dash(1683.5) + frame(1563, 1804) + boxes(retail, 0, false) + poly(retailLine, 0, '#ccc', 3.400) +
  label(22, 1597, '−25.12亿', 135) + label(22, 1796, '−31.99亿', 135);
document.getElementById('force').innerHTML = dash(1978.5) + frame(1858, 2076) + boxes(force, 9, true) + poly(forceLine, 9, '#ccc', 3.400) +
  label(22, 1892, '75.40亿', 118) + label(22, 2091, '48.02亿', 118);
```
